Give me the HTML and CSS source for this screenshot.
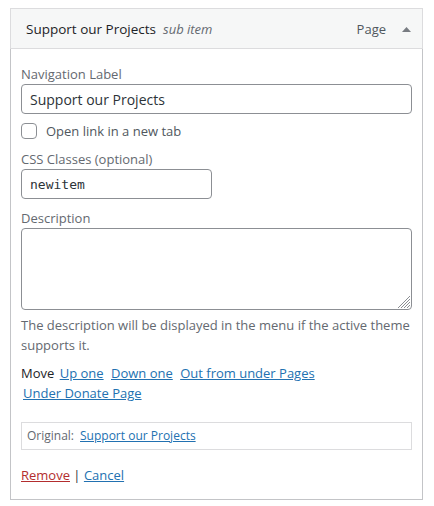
FILE: index.html
```html
<!DOCTYPE html>
<html>
<head>
<meta charset="utf-8">
<link rel="stylesheet" href="styles.css">
</head>
<body>
<div class="menu-item">
  <div class="handle">
    <span class="title">Support our Projects</span><span class="sub">sub item</span>
    <span class="controls"><span class="type">Page</span><svg class="arrow" width="9" height="5" viewBox="0 0 9 5"><polygon points="0,5 4.5,0 9,5" fill="#787c82"/></svg></span>
  </div>
  <div class="settings">
    <div class="field first">
      <label class="lbl">Navigation Label</label>
      <input class="text" type="text" value="Support our Projects">
    </div>
    <label class="check"><input type="checkbox" class="cb"><span>Open link in a new tab</span></label>
    <div class="field css">
      <label class="lbl">CSS Classes (optional)</label>
      <input class="text code" type="text" value="newitem">
    </div>
    <div class="field descfield">
      <label class="lbl">Description</label>
      <div class="ta-wrap">
        <textarea class="ta"></textarea>
        <svg class="grip" width="12" height="12" viewBox="0 0 12 12"><g stroke="#8c8f94" stroke-width="1"><line x1="12" y1="0" x2="0" y2="12"/><line x1="12" y1="3" x2="3" y2="12"/><line x1="12" y1="6" x2="6" y2="12"/><line x1="12" y1="9" x2="9" y2="12"/></g></svg>
      </div>
      <p class="desc">The description will be displayed in the menu if the active theme supports it.</p>
    </div>
    <p class="move">Move <a href="#">Up one</a> <a href="#">Down one</a> <a href="#">Out from under Pages</a> <a href="#">Under Donate Page</a></p>
    <div class="original">Original:<a href="#">Support our Projects</a></div>
    <div class="actions"><a href="#" class="remove">Remove</a> | <a href="#">Cancel</a></div>
  </div>
</div>
</body>
</html>
```

FILE: styles.css
```css
* { box-sizing: border-box; }
body {
  margin: 8px 0 0 10px;
  background: #fff;
  font-family: "Open Sans", "Noto Sans", sans-serif;
  font-size: 13px;
  color: #2c3338;
}
.menu-item { width: 413px; }
.handle {
  display: flex;
  align-items: center;
  height: 41px;
  border: 1px solid #dcdcde;
  background: #f6f7f7;
  padding: 10px 11px 9px 15px;
  line-height: 20px;
}
.title { font-size: 13.5px; font-weight: 500; color: #1d2327; }
.sub { font-style: italic; color: #646970; margin-left: 7px; }
.controls { margin-left: auto; display: flex; align-items: center; }
.type { color: #50575e; }
.arrow { margin-left: 16px; display: block; }
.settings {
  border: 1px solid #c3c4c7;
  border-top: none;
  padding: 15px 10px 14px;
}
.lbl { display: block; line-height: 20px; color: #646970; }
.text {
  display: block;
  width: 100%;
  height: 30px;
  margin: 0;
  border: 1px solid #8c8f94;
  border-radius: 4px;
  padding: 0 8px;
  font-family: "Open Sans", "Noto Sans", sans-serif;
  font-size: 14px;
  color: #2c3338;
  background: #fff;
}
.check {
  display: flex;
  align-items: center;
  gap: 9px;
  height: 20px;
  margin-top: 7px;
  color: #50575e;
}
.cb {
  appearance: none;
  -webkit-appearance: none;
  width: 16px;
  height: 16px;
  margin: 0;
  border: 1px solid #8c8f94;
  border-radius: 4px;
  background: #fff;
}
.css { margin-top: 8px; }
.code {
  width: 191px;
  font-family: "DejaVu Sans Mono", monospace;
  font-size: 13px;
}
.descfield { margin-top: 9px; }
.ta-wrap { position: relative; }
.ta {
  display: block;
  width: 100%;
  height: 82px;
  margin: 0;
  border: 1px solid #8c8f94;
  border-radius: 4px;
  resize: none;
  background: #fff;
}
.grip { position: absolute; right: 2px; bottom: 2px; }
.desc { margin: 5px 0 0; line-height: 20px; color: #646970; }
.move { margin: 9px 0 0; line-height: 19.5px; color: #1d2327; }
.move a { margin: 0 2px; white-space: nowrap; }
a { color: #2271b1; text-decoration: underline; }
.original {
  margin-top: 19px;
  border: 1px solid #dcdcde;
  padding: 4px 5px;
  line-height: 18px;
  font-size: 12px;
  color: #646970;
}
.original a { margin-left: 6px; }
.actions { margin-top: 15px; line-height: 20px; color: #2c3338; }
.actions .remove { color: #b32d2e; }
```
